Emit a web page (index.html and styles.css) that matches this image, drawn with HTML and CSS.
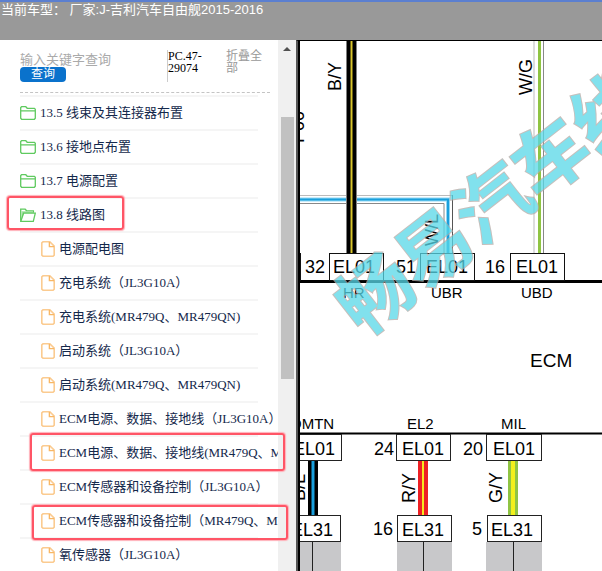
FILE: index.html
```html
<!DOCTYPE html>
<html lang="zh-CN">
<head>
    <meta charset="UTF-8">
    <meta name="viewport" content="width=device-width, initial-scale=1.0">
    <title>线路图</title>
    <link rel="stylesheet" href="styles.css">
</head>
<body>
    <!-- Icons -->
    <svg class="sprite" width="0" height="0">
        <symbol id="folder" viewBox="0 0 16 14">
            <path d="M.7 12.3V1.6L1.6.7h4.2l1.4 1.6h7.2l.9.9v9.1l-.9 1H1.6zM.7 4.8h14.6" fill="none" stroke="#5fca5f" stroke-width="1.3"/>
        </symbol>
        <symbol id="folder-open" viewBox="0 0 16 14">
            <path d="M.7 12.8V1.2h4.5l1.4 1.6h6.8v2" fill="none" stroke="#5fca5f" stroke-width="1.3"/>
            <path d="M3 3.2h10v2H4L1.5 11V3.2z" fill="#9fdf9f"/>
            <path d="M.8 13.3L3.6 5.2h11.7l-2 8.1z" fill="#fff" stroke="#5fca5f" stroke-width="1.3"/>
        </symbol>
        <symbol id="file" viewBox="0 0 14 16">
            <path d="M2 .8h6.8l4.4 4.4v8.9l-1.1 1.1H2L.8 14.1V1.9z" fill="none" stroke="#fbcb90" stroke-width="1.6"/>
            <path d="M8.4 1v4.6H13" fill="none" stroke="#f8b765" stroke-width="1.4"/>
        </symbol>
    </svg>

    <header>当前车型： 厂家:J-吉利汽车自由舰2015-2016</header>

    <main>
        <aside class="sidebar">
            <div class="panel">
                <div class="toolbar">
                    <form class="search">
                        <input type="text" placeholder="输入关键字查询" aria-label="输入关键字查询">
                        <button type="button">查询</button>
                    </form>
                    <span class="code">PC.47-29074</span>
                    <a class="collapse" href="#">折叠全部</a>
                </div>
                <nav>
                    <ul class="tree">
                        <li><a href="#"><svg class="folder"><use href="#folder"/></svg>13.5 线束及其连接器布置</a></li>
                        <li><a href="#"><svg class="folder"><use href="#folder"/></svg>13.6 接地点布置</a></li>
                        <li><a href="#"><svg class="folder"><use href="#folder"/></svg>13.7 电源配置</a></li>
                        <li>
                            <a href="#"><svg class="folder"><use href="#folder-open"/></svg>13.8 线路图</a>
                            <ul class="files">
                                <li><a href="#"><svg class="file"><use href="#file"/></svg>电源配电图</a></li>
                                <li><a href="#"><svg class="file"><use href="#file"/></svg>充电系统（JL3G10A）</a></li>
                                <li><a href="#"><svg class="file"><use href="#file"/></svg>充电系统(MR479Q、MR479QN)</a></li>
                                <li><a href="#"><svg class="file"><use href="#file"/></svg>启动系统（JL3G10A）</a></li>
                                <li><a href="#"><svg class="file"><use href="#file"/></svg>启动系统(MR479Q、MR479QN)</a></li>
                                <li><a href="#"><svg class="file"><use href="#file"/></svg>ECM电源、数据、接地线（JL3G10A）</a></li>
                                <li><a href="#"><svg class="file"><use href="#file"/></svg>ECM电源、数据、接地线(MR479Q、MR479QN)</a></li>
                                <li><a href="#"><svg class="file"><use href="#file"/></svg>ECM传感器和设备控制（JL3G10A）</a></li>
                                <li><a href="#"><svg class="file"><use href="#file"/></svg>ECM传感器和设备控制（MR479Q、MR479QN）</a></li>
                                <li><a href="#"><svg class="file"><use href="#file"/></svg>氧传感器（JL3G10A）</a></li>
                            </ul>
                        </li>
                    </ul>
                </nav>
            </div>
            <div class="scrollbar">
                <span class="arrow"></span>
                <span class="thumb"></span>
            </div>
            <!-- Marked entries -->
            <div class="mark mark-folder"></div>
            <div class="mark mark-power"></div>
            <div class="mark mark-sensor"></div>
        </aside>

        <section class="diagram">
            <svg viewBox="300 41 302 530" preserveAspectRatio="xMinYMin slice">
                <!-- Upper wires -->
                <path d="M351.500 41V254" stroke="#000" stroke-width="10"/>
                <path d="M351.500 41V254" stroke="#d9c52c" stroke-width="2"/>
                <g fill="none">
                    <path d="M300 195.500H346M357 195.500H452.500" stroke="#bbb"/>
                    <path d="M452.500 195V254" stroke="#555"/>
                    <path d="M300 199.500H346M357 199.500H448V254" stroke="#8fd8f5" stroke-width="4"/>
                    <path d="M300 199.500H346M357 199.500H448V254" stroke="#1a9fdc" stroke-width="2"/>
                    <path d="M300 203.500H346M357 203.500H444V254" stroke="#888"/>
                    <path d="M534 41V254" stroke="#bbb"/>
                    <path d="M543.500 41V254" stroke="#888"/>
                    <path d="M539.500 41V254" stroke="#8fc443" stroke-width="3"/>
                </g>

                <!-- Upper connectors -->
                <path d="M300 281.500H602" stroke="#000" stroke-width="3"/>
                <g fill="#fff" stroke="#111">
                    <path d="M300.500 253V281"/>
                    <rect x="329.500" y="253.500" width="54" height="27"/>
                    <rect x="420.500" y="253.500" width="54" height="27"/>
                    <rect x="510.500" y="253.500" width="54" height="27"/>
                </g>
                <g class="pin">
                    <text x="305" y="273">32</text>
                    <text x="333" y="273">EL01</text>
                    <text x="396" y="273">51</text>
                    <text x="426" y="273">EL01</text>
                    <text x="485" y="273">16</text>
                    <text x="516" y="273">EL01</text>
                </g>
                <g class="signal">
                    <text x="343" y="298">HR</text>
                    <text x="431" y="298">UBR</text>
                    <text x="521" y="298">UBD</text>
                    <text x="290" y="429">OMTN</text>
                    <text x="407" y="429">EL2</text>
                    <text x="501" y="429">MIL</text>
                </g>
                <text class="unit" x="530" y="367">ECM</text>

                <!-- Lower wires -->
                <path d="M313 460V515" stroke="#000" stroke-width="10"/>
                <path d="M313 460V515" stroke="#1a9fdc" stroke-width="3"/>
                <path d="M423 460V515" stroke="#ed2024" stroke-width="10"/>
                <path d="M423 460V515" stroke="#f6e81e" stroke-width="2"/>
                <path d="M513 460V515" stroke="#8fc443" stroke-width="10"/>
                <path d="M513 460V515" stroke="#f3f01c" stroke-width="4"/>

                <!-- Lower connectors -->
                <path d="M300 433.500H602" stroke="#000" stroke-width="2"/>
                <g fill="#fff" stroke="#222">
                    <rect x="290.500" y="434.500" width="51" height="26"/>
                    <rect x="396.500" y="434.500" width="54" height="26"/>
                    <rect x="486.500" y="434.500" width="55" height="26"/>
                    <rect x="290.500" y="515.500" width="50" height="26"/>
                    <rect x="397.500" y="515.500" width="54" height="26"/>
                    <rect x="487.500" y="515.500" width="54" height="26"/>
                </g>
                <g fill="#c8c8ca">
                    <rect x="290" y="542" width="51" height="29"/>
                    <rect x="397" y="542" width="55" height="29"/>
                    <rect x="486" y="542" width="56" height="29"/>
                </g>
                <path d="M312.500 542V571M423.500 542V571M513.500 542V571" stroke="#222"/>
                <g class="pin">
                    <text x="293" y="455">EL01</text>
                    <text x="374" y="455">24</text>
                    <text x="402" y="455">EL01</text>
                    <text x="463" y="455">20</text>
                    <text x="493" y="455">EL01</text>
                    <text x="291" y="536">EL31</text>
                    <text x="373" y="535">16</text>
                    <text x="402" y="536">EL31</text>
                    <text x="472" y="535">5</text>
                    <text x="491" y="536">EL31</text>
                </g>

                <!-- Wire colours -->
                <g class="pin">
                    <text transform="translate(341 91) rotate(-90)">B/Y</text>
                    <text transform="translate(304 143) rotate(-90)">P00</text>
                    <text transform="translate(532 95) rotate(-90)">W/G</text>
                    <text transform="translate(438 246) rotate(-90)">W/L</text>
                    <text transform="translate(305 501) rotate(-90)">B/L</text>
                    <text transform="translate(415 503) rotate(-90)">R/Y</text>
                    <text transform="translate(502 503) rotate(-90)">G/Y</text>
                </g>

                <!-- Watermark -->
                <text class="watermark" transform="translate(363 338) rotate(-38)">畅易汽车线</text>
            </svg>
        </section>
    </main>
</body>
</html>
```

FILE: styles.css
```css
* {
    box-sizing: border-box;
}

body {
    margin: 0;
    height: 100vh;
    display: flex;
    flex-direction: column;
    overflow: hidden;
    background-color: #fff;
    font-family: "Liberation Serif", "Noto Sans CJK SC", serif;
    font-size: 13px;
}

.sprite {
    position: absolute;
}

header {
    flex: none;
    height: 40px;
    padding-left: 1px;
    border-top: 2px solid #5b7fd0;
    background-color: #999;
    color: #fff;
    font-family: "Liberation Sans", "Noto Sans CJK SC", sans-serif;
    line-height: 16px;
}

main {
    flex: 1;
    display: flex;
    min-height: 0;
}

.sidebar {
    position: relative;
    flex: none;
    display: flex;
    width: 296px;
}

.panel {
    flex: 1;
    min-width: 0;
    padding: 10px 8px 0 20px;
    overflow: hidden;
}

.toolbar {
    display: flex;
    height: 43px;
    border-bottom: 1px dashed #c4c4c4;
    font-size: 12px;
    line-height: 12px;
}

.search {
    display: flex;
    flex-direction: column;
    align-items: flex-start;
    width: 147px;
}

.search input {
    width: 100%;
    height: 17px;
    padding: 2px 0 0;
    border: none;
    outline: none;
    background: none;
    font-family: inherit;
    font-size: 13px;
}

.search input::placeholder {
    color: #aaa;
}

.search button {
    width: 46px;
    height: 15px;
    padding: 0;
    border: none;
    border-radius: 4px;
    background-color: #0a72cc;
    color: #fff;
    font-family: inherit;
    font-size: 12px;
    line-height: 15px;
    cursor: pointer;
}

.code {
    width: 59px;
    height: 32px;
    border-left: 1px solid #ccc;
}

.collapse {
    width: 40px;
    color: #999;
    text-decoration: none;
}

.tree,
.files {
    margin: 0;
    padding: 0;
    list-style: none;
}

.tree {
    width: 238px;
    padding-top: 2px;
}

.tree a {
    display: flex;
    align-items: center;
    gap: 4px;
    height: 34px;
    padding-bottom: 4px;
    border-top: 2px solid #f5f5f5;
    color: #14284b;
    text-decoration: none;
    white-space: nowrap;
}

.tree svg {
    flex: none;
    margin-top: 4px;
}

.files a {
    padding-left: 21px;
}

.folder {
    width: 16px;
    height: 14px;
}

.file {
    width: 14px;
    height: 16px;
}

.scrollbar {
    flex: none;
    display: flex;
    flex-direction: column;
    align-items: center;
    gap: 66px;
    width: 18px;
    padding-top: 7px;
    background-color: #f0f0f0;
}

.arrow {
    border: 4px solid transparent;
    border-top: none;
    border-bottom: 4px solid #505050;
}

.thumb {
    width: 13px;
    height: 50%;
    background-color: #c1c1c1;
}

.mark {
    position: absolute;
    border: 2px solid #ff5566;
    border-radius: 3px;
    box-shadow: 0 0 1px 1px #ffb0b8;
}

.mark-folder {
    top: 156px;
    left: 7px;
    width: 117px;
    height: 34px;
}

.mark-power {
    top: 393px;
    left: 30px;
    width: 255px;
    height: 38px;
}

.mark-sensor {
    top: 465px;
    left: 32px;
    width: 256px;
    height: 35px;
}

.diagram {
    flex: 1;
    min-width: 0;
    padding-left: 2px;
    border-top: 1px solid #000;
    border-left: 2px solid #555;
    background-color: #000;
    overflow: hidden;
}

.diagram svg {
    display: block;
    width: 100%;
    height: 100%;
    background-color: #fff;
    font-family: "Liberation Sans", sans-serif;
}

.pin {
    font-size: 18px;
}

.signal {
    font-size: 15px;
}

.unit {
    font-size: 19px;
}

.watermark {
    font-family: "Noto Sans CJK SC", sans-serif;
    font-size: 74px;
    font-weight: bold;
    fill: #58d8e8;
    stroke: #b3aaa6;
    stroke-width: 2px;
    paint-order: stroke;
    opacity: 0.75;
}
```
